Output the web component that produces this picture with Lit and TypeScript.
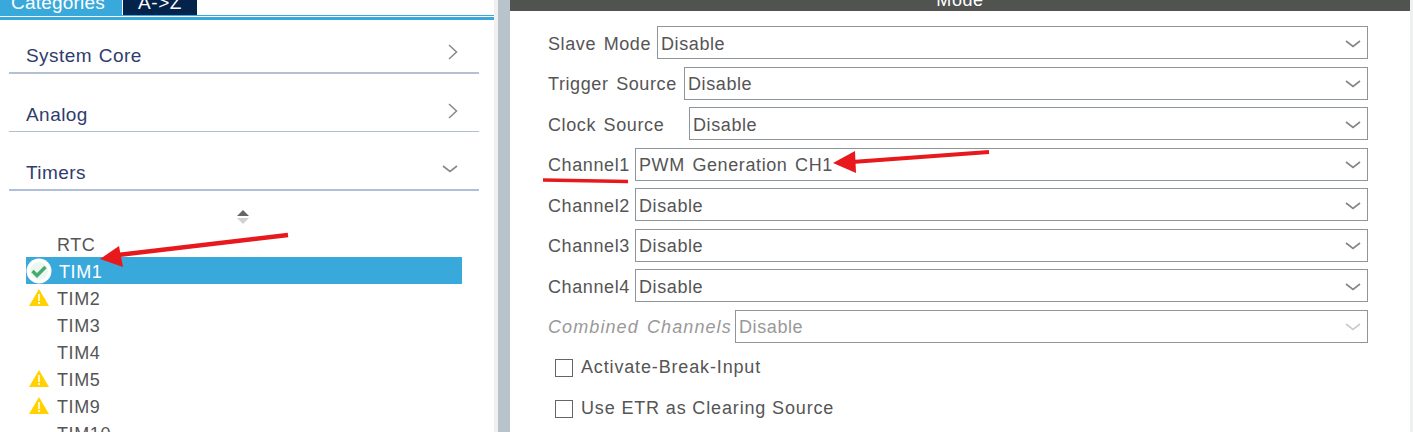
import { LitElement, html, css, svg } from 'lit';
import { customElement } from 'lit/decorators.js';
import { classMap } from 'lit/directives/class-map.js';

const categories = [
  { name: 'System Core', open: false },
  { name: 'Analog', open: false },
  { name: 'Timers', open: true },
];

const timers = [
  { name: 'RTC', icon: '' },
  { name: 'TIM1', icon: 'ok', selected: true },
  { name: 'TIM2', icon: 'warn' },
  { name: 'TIM3', icon: '' },
  { name: 'TIM4', icon: '' },
  { name: 'TIM5', icon: 'warn' },
  { name: 'TIM9', icon: 'warn' },
  { name: 'TIM10', icon: '' },
];

// label column differs per row in the original form
const modes = [
  { label: 'Slave Mode', width: 109, value: 'Disable' },
  { label: 'Trigger Source', width: 136, value: 'Disable' },
  { label: 'Clock Source', width: 141, value: 'Disable' },
  { label: 'Channel1', width: 87, value: 'PWM Generation CH1' },
  { label: 'Channel2', width: 87, value: 'Disable' },
  { label: 'Channel3', width: 87, value: 'Disable' },
  { label: 'Channel4', width: 87, value: 'Disable' },
  { label: 'Combined Channels', width: 187, value: 'Disable', disabled: true },
];

const chevronDown = html`<svg class="chev-down" width="16" height="8" viewBox="0 0 16 8">
  <path d="M1 1 L8 6.5 L15 1" fill="none" stroke="currentColor" stroke-width="1.6" />
</svg>`;

const chevronRight = html`<svg width="10" height="16" viewBox="0 0 10 16">
  <path d="M1 1 L8.5 8 L1 15" fill="none" stroke="currentColor" stroke-width="1.5" />
</svg>`;

const okIcon = html`<svg width="26" height="26" viewBox="0 0 26 26">
  <circle cx="13" cy="13" r="12.5" fill="#fff" />
  <circle cx="13" cy="13" r="9" fill="#eef6f0" />
  <path d="M6.5 13 L11 17.5 L19.5 9" fill="none" stroke="#45ab6e" stroke-width="3.4" />
</svg>`;

const warnIcon = html`<svg width="20" height="17" viewBox="0 0 20 17">
  <path d="M10 0 L20 17 L0 17 Z" fill="#ffd200" />
  <rect x="9" y="5" width="2" height="7" fill="#fff6c8" />
  <rect x="9" y="13" width="2" height="2" fill="#fff6c8" />
</svg>`;

@customElement('app-root')
export class AppRoot extends LitElement {
  static styles = css`
    :host {
      display: block;
      position: relative;
      width: 1413px;
      height: 432px;
      overflow: hidden;
      background: #fff;
      font-family: 'Liberation Sans', Arial, sans-serif;
      font-size: 18px;
      letter-spacing: 0.6px;
      word-spacing: 2px;
      color: #555;
    }
    .page {
      display: flex;
      height: 432px;
    }
    .left {
      width: 494px;
      flex: none;
    }
    .tabs {
      display: flex;
      gap: 1px;
      height: 15px;
      overflow: hidden;
    }
    .tab {
      box-sizing: border-box;
      height: 15px;
      padding-top: 2.5px;
      line-height: 0;
      text-align: center;
      color: #fff;
      font-size: 19px;
    }
    .tab.cat {
      width: 122px;
      padding-right: 6px;
      letter-spacing: 0.2px;
      background: #39a9dc;
    }
    .tab.az {
      width: 74px;
      background: #03234b;
    }
    .rule-thin {
      height: 1px;
      margin-right: -2px;
      background: #39a9dc;
    }
    .rule-thick {
      height: 3px;
      margin-top: 1px;
      margin-right: -2px;
      background: #39a9dc;
    }
    .cats {
      padding: 0 15px 0 9px;
    }
    .cat-row {
      box-sizing: border-box;
      height: 58px;
      padding: 0 21px 5px 17px;
      display: flex;
      align-items: flex-end;
      justify-content: space-between;
      border-bottom: 1px solid #b5bfca;
      color: #2f3d6e;
      font-size: 19px;
      letter-spacing: 0.45px;
      word-spacing: 1px;
    }
    .cat-row.first {
      height: 54px;
      border-bottom: 2px solid #b4c0d4;
    }
    .cat-row.last {
      height: 59px;
      border-bottom: 2px solid #b0c0da;
    }
    .cat-row svg {
      color: #888;
      margin-bottom: 7px;
    }
    .cat-row.last svg {
      margin: 0 0 11px 0;
    }
    .sorter {
      display: flex;
      flex-direction: column;
      align-items: center;
      gap: 2px;
      width: 14px;
      margin: 19px 0 0 236px;
    }
    .sorter i {
      display: block;
      width: 0;
      height: 0;
      border-left: 6px solid transparent;
      border-right: 6px solid transparent;
    }
    .sorter .up {
      border-bottom: 6px solid #666;
    }
    .sorter .down {
      border-top: 6px solid #d0d0d0;
    }
    .tree {
      width: 436px;
      margin: 6px 0 0 26px;
    }
    .node {
      display: flex;
      align-items: center;
      height: 27px;
      white-space: nowrap;
    }
    .node .name {
      padding-top: 3px;
    }
    .node.selected {
      background: #39a9dc;
      color: #fff;
    }
    .slot {
      width: 31px;
      flex: none;
      display: flex;
      justify-content: center;
      padding-right: 5px;
      box-sizing: border-box;
    }
    .node.selected .slot {
      width: 33px;
      padding: 1px 7px 0 0;
    }
    .gutter {
      width: 16px;
      flex: none;
      background: linear-gradient(90deg, #f0f0f0 4px, #b8c4cb 4px);
    }
    .right {
      width: 900px;
      flex: none;
    }
    .mode-head {
      box-sizing: border-box;
      height: 11px;
      overflow: hidden;
      background: #515351;
      color: #fff;
      line-height: 0;
      text-align: center;
    }
    .form {
      padding: 15px 0 0 38px;
    }
    .field {
      display: flex;
      align-items: center;
      height: 33px;
      margin-bottom: 7.57px;
      width: 820px;
    }
    .field .label {
      flex: none;
      white-space: nowrap;
      padding-top: 3px;
    }
    .select {
      flex: 1;
      box-sizing: border-box;
      height: 33px;
      display: flex;
      align-items: center;
      justify-content: space-between;
      padding: 0 6px 0 3px;
      border: 1px solid #8f969b;
      background: #fff;
    }
    .select span {
      padding-top: 3px;
    }
    .select svg {
      margin-top: 2px;
      color: #858585;
    }
    .field.disabled .label {
      color: #999;
      font-style: italic;
      letter-spacing: 1.1px;
      padding-top: 2px;
    }
    .field.disabled .select {
      color: #999;
    }
    .field.disabled .select span {
      padding-top: 2px;
    }
    .field.disabled svg {
      color: #ccc;
    }
    .check {
      display: flex;
      align-items: center;
      gap: 8px;
      height: 18px;
      margin: 0 0 23px 7px;
      letter-spacing: 0.85px;
      word-spacing: 0;
    }
    .check i {
      display: block;
      box-sizing: border-box;
      width: 18px;
      height: 18px;
      border: 1.5px solid #666;
    }
    .checks {
      padding-top: 8px;
    }
    .edge {
      flex: 1;
      background: #eef0f0;
    }
    .marks {
      position: absolute;
      left: 0;
      top: 0;
      pointer-events: none;
    }
  `;

  render() {
    return html`
      <div class="page">
        <div class="left">
          <div class="tabs">
            <div class="tab cat">Categories</div>
            <div class="tab az">A-&gt;Z</div>
          </div>
          <div class="rule-thin"></div>
          <div class="rule-thick"></div>
          <div class="cats">
            ${categories.map(
              (c, i) => html`<div class=${classMap({ 'cat-row': true, first: i === 0, last: c.open })}>
                <span>${c.name}</span>
                ${c.open ? chevronDown : chevronRight}
              </div>`
            )}
          </div>
          <div class="sorter"><i class="up"></i><i class="down"></i></div>
          <div class="tree">
            ${timers.map(
              (t) => html`<div class=${classMap({ node: true, selected: !!t.selected })}>
                <span class="slot">${t.icon === 'ok' ? okIcon : t.icon === 'warn' ? warnIcon : ''}</span>
                <span class="name">${t.name}</span>
              </div>`
            )}
          </div>
        </div>
        <div class="gutter"></div>
        <div class="right">
          <div class="mode-head">Mode</div>
          <div class="form">
            ${modes.map(
              (m) => html`<div class=${classMap({ field: true, disabled: !!m.disabled })}>
                <span class="label" style="width:${m.width}px">${m.label}</span>
                <div class="select"><span>${m.value}</span>${chevronDown}</div>
              </div>`
            )}
            <div class="checks">
              <label class="check"><i></i>Activate-Break-Input</label>
              <label class="check"><i></i>Use ETR as Clearing Source</label>
            </div>
          </div>
        </div>
        <div class="edge"></div>
      </div>
      <svg class="marks" width="1413" height="432" viewBox="0 0 1413 432">
        ${svg`
          <path d="M288 235 L118 255" stroke="#e8191c" stroke-width="4.5" fill="none" />
          <path d="M100 259 L119 246 L123 267 Z" fill="#e8191c" />
          <path d="M543 180 L628 181.5" stroke="#e8191c" stroke-width="3.5" fill="none" />
          <path d="M989 152 L852 162" stroke="#e8191c" stroke-width="4" fill="none" />
          <path d="M833 163 L855 151 L856 173 Z" fill="#e8191c" />
        `}
      </svg>
    `;
  }
}
